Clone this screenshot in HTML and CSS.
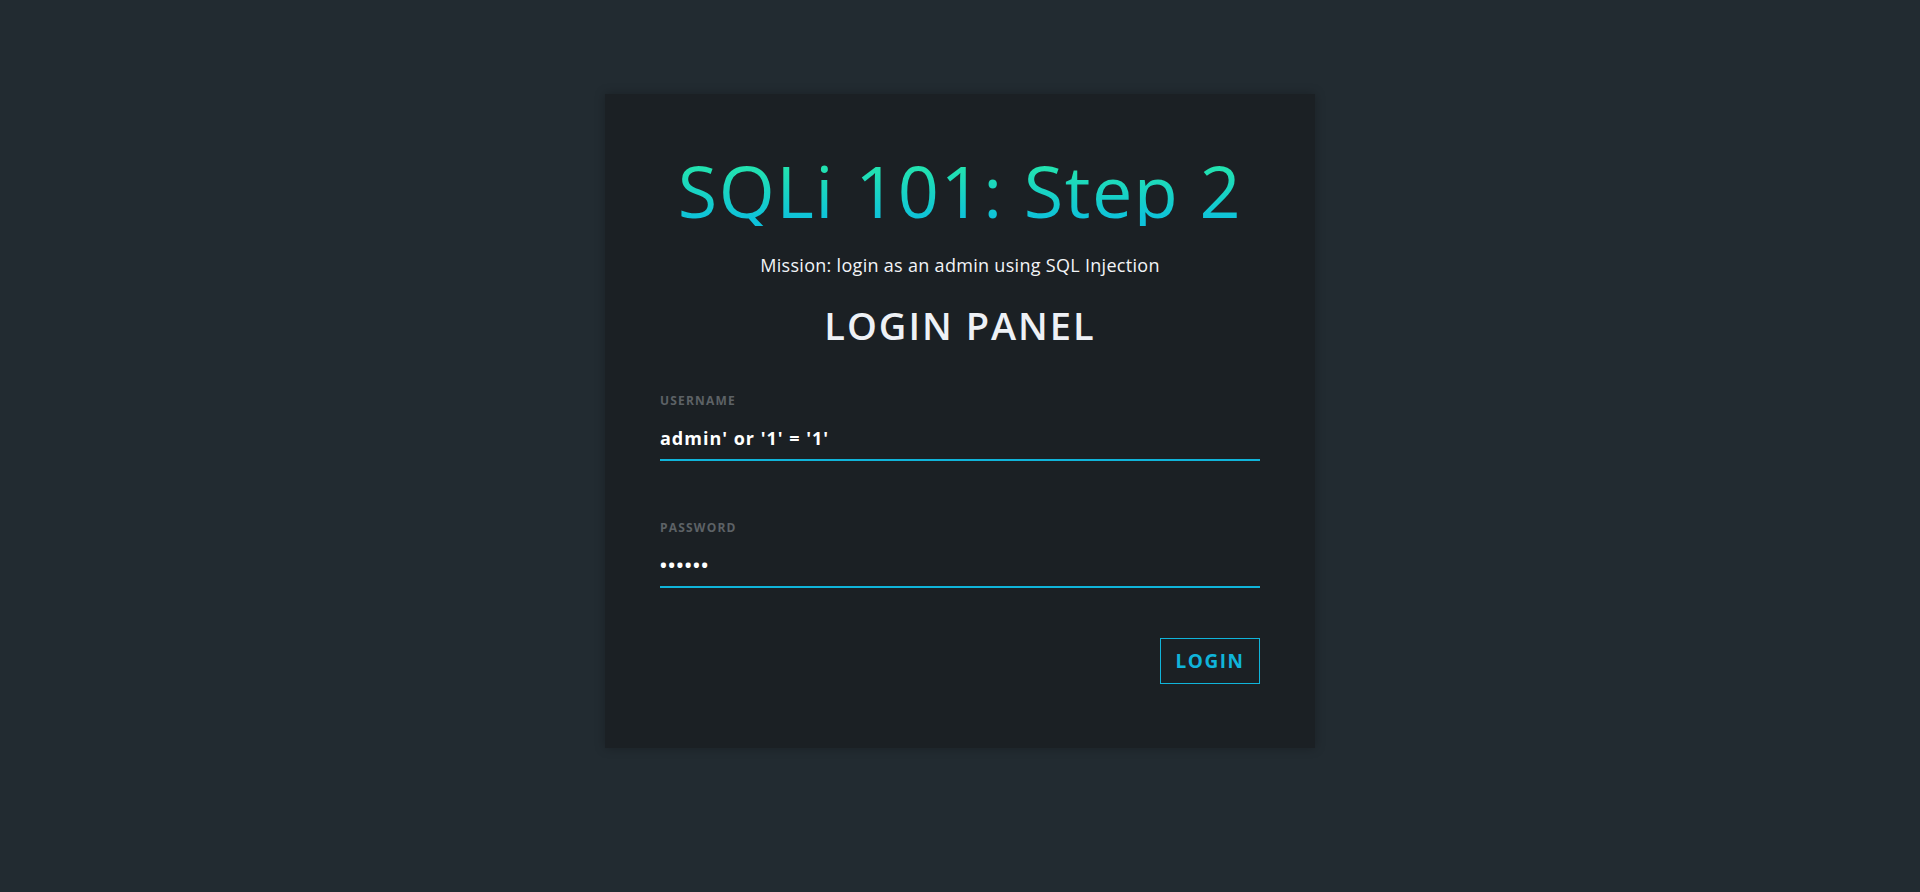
FILE: index.html
```html
<!DOCTYPE html>
<html lang="en">
<head>
<meta charset="utf-8">
<title>SQLi 101: Step 2</title>
<link rel="stylesheet" href="styles.css">
</head>
<body>
<main class="card">
  <h1 class="title">SQLi 101: Step 2</h1>
  <p class="mission">Mission: login as an admin using SQL Injection</p>
  <h2 class="panel">LOGIN PANEL</h2>
  <form class="form">
    <label class="field">
      <span class="label">Username</span>
      <input class="input" type="text" value="admin' or '1' = '1'">
    </label>
    <label class="field field-pass">
      <span class="label">Password</span>
      <input class="input input-pass" type="password" value="123456">
    </label>
    <div class="actions">
      <button class="btn" type="button">LOGIN</button>
    </div>
  </form>
</main>
</body>
</html>
```

FILE: styles.css
```css
html, body {
  margin: 0;
  padding: 0;
}
body {
  background: #222b31;
  min-height: 892px;
  font-family: "Open Sans", "Noto Sans", sans-serif;
  overflow: hidden;
}
.card {
  width: 600px;
  margin: 94px auto 0;
  padding: 60px 55px 64px;
  background: #1b2024;
  box-shadow: 0 0 10px rgba(0, 0, 0, 0.25);
  display: flex;
  flex-direction: column;
  align-items: stretch;
}
.title {
  margin: 0;
  font-size: 72px;
  line-height: 72px;
  font-weight: 400;
  text-align: center;
  letter-spacing: 1.5px;
  background: linear-gradient(180deg, #22e2b0 20%, #0ec2da 90%);
  -webkit-background-clip: text;
  background-clip: text;
  color: transparent;
}
.mission {
  margin: 29px 0 0;
  font-size: 18px;
  line-height: 20px;
  letter-spacing: 0.3px;
  color: #f2f4f7;
  text-align: center;
}
.panel {
  margin: 31px 0 0;
  font-size: 38px;
  line-height: 38px;
  font-weight: 600;
  letter-spacing: 2px;
  color: #eef1f6;
  text-align: center;
}
.form {
  display: flex;
  flex-direction: column;
  margin-top: 51px;
}
.field {
  display: flex;
  flex-direction: column;
}
.field-pass {
  margin-top: 61px;
}
.label {
  font-size: 12px;
  line-height: 12px;
  font-weight: 700;
  letter-spacing: 1.2px;
  text-transform: uppercase;
  color: #5d6266;
}
.input {
  margin-top: 11px;
  padding: 10px 0 11px;
  border: 0;
  border-bottom: 2px solid #10b4da;
  background: transparent;
  outline: none;
  font-family: "Open Sans", "Noto Sans", sans-serif;
  font-size: 18px;
  line-height: 20px;
  font-weight: 700;
  letter-spacing: 1px;
  color: #ffffff;
}
.input-pass {
  letter-spacing: 1.5px;
}
.actions {
  display: flex;
  justify-content: flex-end;
  margin-top: 50px;
}
.btn {
  width: 100px;
  height: 46px;
  box-sizing: border-box;
  border: 1px solid #10b4da;
  background: transparent;
  color: #10b4da;
  font-family: "Open Sans", "Noto Sans", sans-serif;
  font-size: 19px;
  font-weight: 700;
  letter-spacing: 1.5px;
  padding: 0;
  cursor: pointer;
}
```
